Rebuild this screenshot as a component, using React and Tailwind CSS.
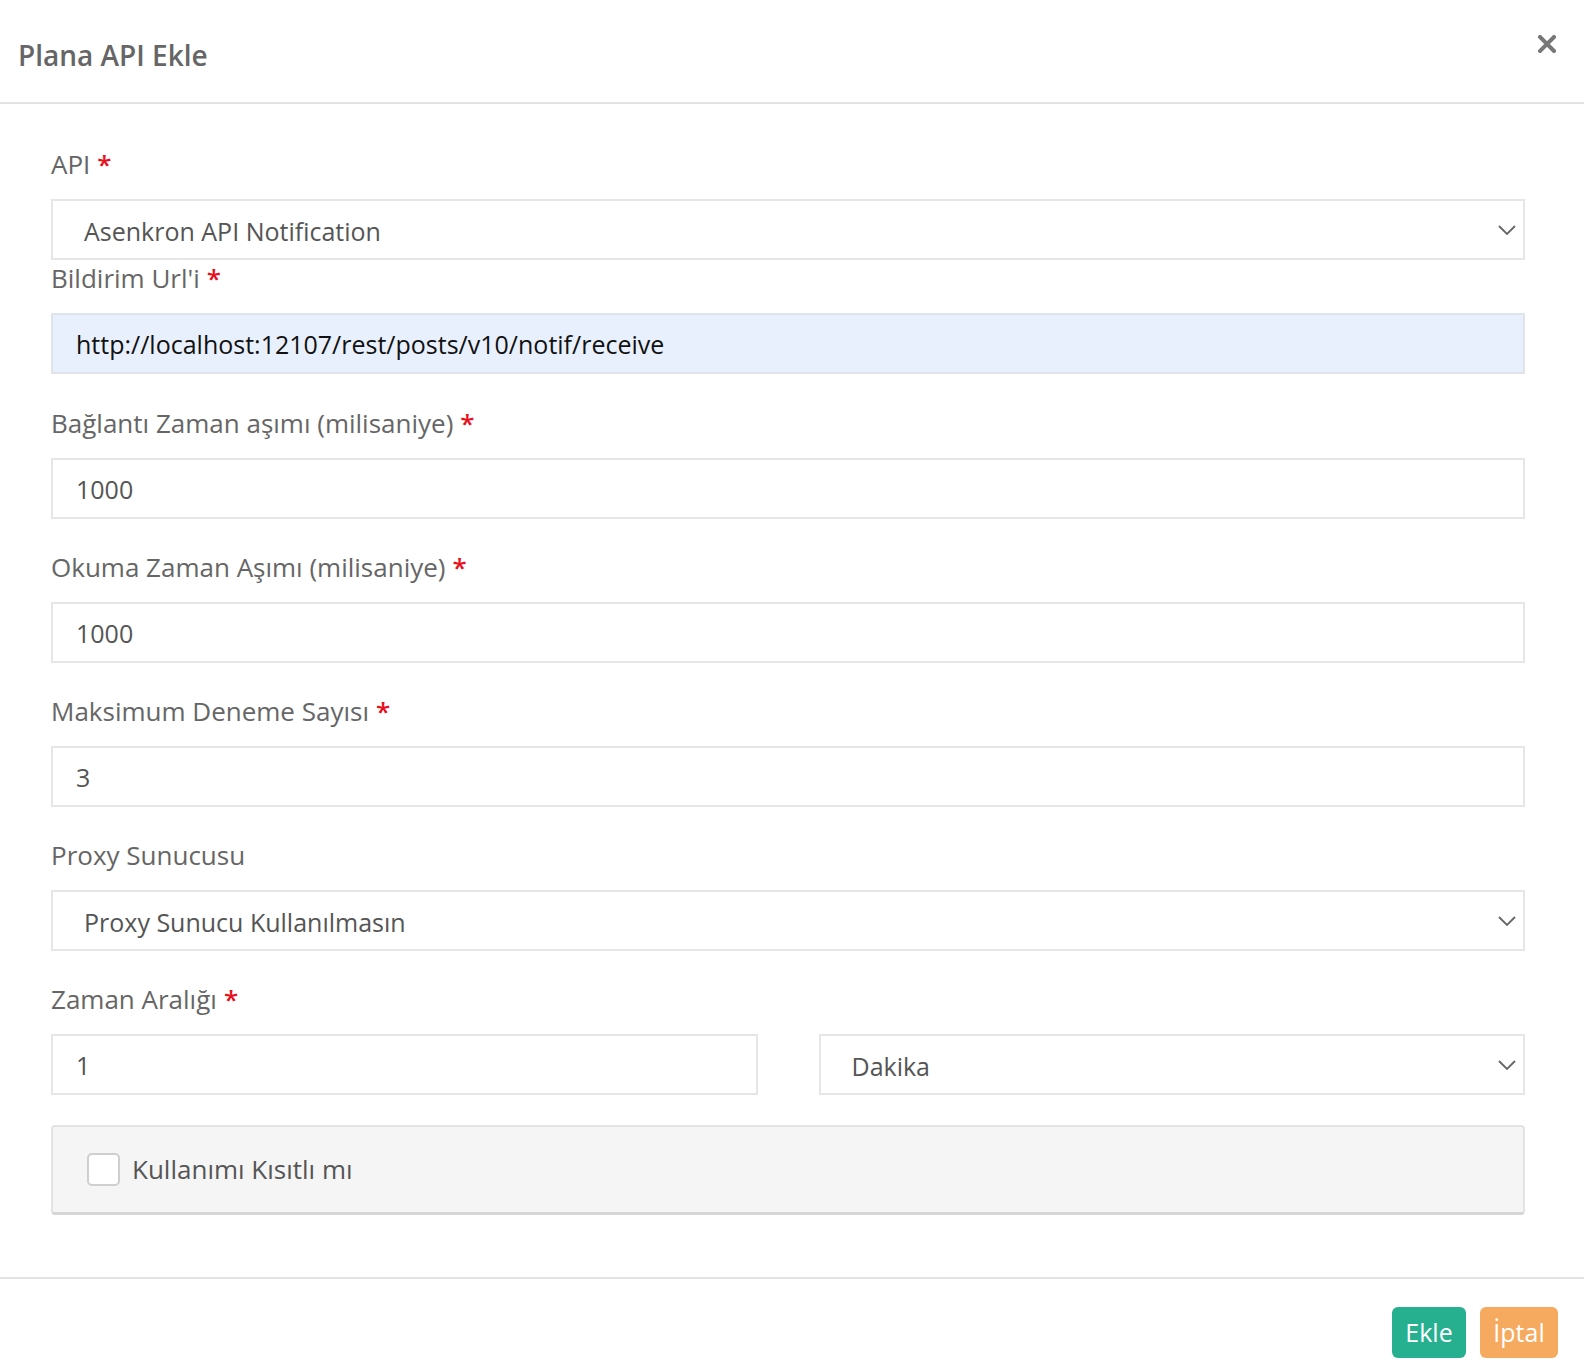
import React from 'react';

const font = { fontFamily: '"Open Sans", "Liberation Sans", sans-serif' };

const Label = ({ children, required }) => (
  <div className="text-[26px] leading-[36px] text-[#666] mb-[17px]">
    {children}
    {required && <span className="text-[#e8101c] ml-[7px] font-semibold">*</span>}
  </div>
);

const Chevron = () => (
  <svg width="18" height="10" viewBox="0 0 18 10" className="absolute right-[7px] top-1/2 -translate-y-1/2">
    <path d="M1 1 L9 9 L17 1" fill="none" stroke="#666" strokeWidth="1.8" />
  </svg>
);

const Select = ({ value, className = '' }) => (
  <div className={`relative h-[61px] border-2 border-[#e6e6e6] bg-white flex items-center pl-[31px] pt-[4px] text-[25px] text-[#555] ${className}`}>
    {value}
    <Chevron />
  </div>
);

const Input = ({ value, className = '' }) => (
  <div className={`h-[61px] border-2 border-[#e6e6e6] bg-white flex items-center pl-[23px] pt-[2px] text-[25px] text-[#555] ${className}`}>
    {value}
  </div>
);

const App = () => {
  return (
    <div style={font} className="w-[1584px] h-[1370px] bg-white flex flex-col">
      {/* Header */}
      <div className="h-[104px] border-b-2 border-[#e2e2e2] flex justify-between pl-[18px] pr-[28px]">
        <div className="pt-[36px] text-[28px] leading-[38px] font-semibold text-[#666]">Plana API Ekle</div>
        <button className="pt-[35px] self-start">
          <svg width="18" height="18" viewBox="0 0 18 18">
            <path d="M2 2 L16 16 M16 2 L2 16" stroke="#777" strokeWidth="4" strokeLinecap="square" />
          </svg>
        </button>
      </div>

      {/* Body */}
      <div className="pt-[42px] pl-[51px] pr-[59px] pb-[62px] border-b-2 border-[#e2e2e2]">
        <Label required>API</Label>
        <Select value="Asenkron API Notification" />

        <Label required>Bildirim Url'i</Label>
        <div className="h-[61px] border-2 border-[#e0e3ea] bg-[#e8f0fe] flex items-center pl-[23px] pt-[2px] text-[25px] text-[#111] mb-[31px]">
          http://localhost:12107/rest/posts/v10/notif/receive
        </div>

        <Label required>Bağlantı Zaman aşımı (milisaniye)</Label>
        <Input value="1000" className="mb-[30px]" />

        <Label required>Okuma Zaman Aşımı (milisaniye)</Label>
        <Input value="1000" className="mb-[30px]" />

        <Label required>Maksimum Deneme Sayısı</Label>
        <Input value="3" className="mb-[30px]" />

        <Label>Proxy Sunucusu</Label>
        <Select value="Proxy Sunucu Kullanılmasın" className="mb-[30px]" />

        <Label required>Zaman Aralığı</Label>
        <div className="grid grid-cols-2 gap-[61px] mb-[30px]">
          <Input value="1" />
          <Select value="Dakika" />
        </div>

        <div className="h-[90px] bg-[#f5f5f5] border-2 border-[#e3e3e3] border-b-[3px] border-b-[#d6d6d6] rounded-[4px] flex items-center pl-[34px]">
          <div className="w-[33px] h-[33px] bg-white border-2 border-[#cfcfcf] rounded-[5px]" />
          <span className="ml-[12px] text-[26px] text-[#555]">Kullanımı Kısıtlı mı</span>
        </div>
      </div>

      {/* Footer */}
      <div className="flex justify-end gap-[14px] pt-[28px] pr-[26px]">
        <button className="w-[74px] h-[51px] rounded-[6px] bg-[#26b08f] text-white text-[25px]">Ekle</button>
        <button className="w-[78px] h-[51px] rounded-[6px] bg-[#f6aa5f] text-white text-[25px]">İptal</button>
      </div>
    </div>
  );
};

export default App;
